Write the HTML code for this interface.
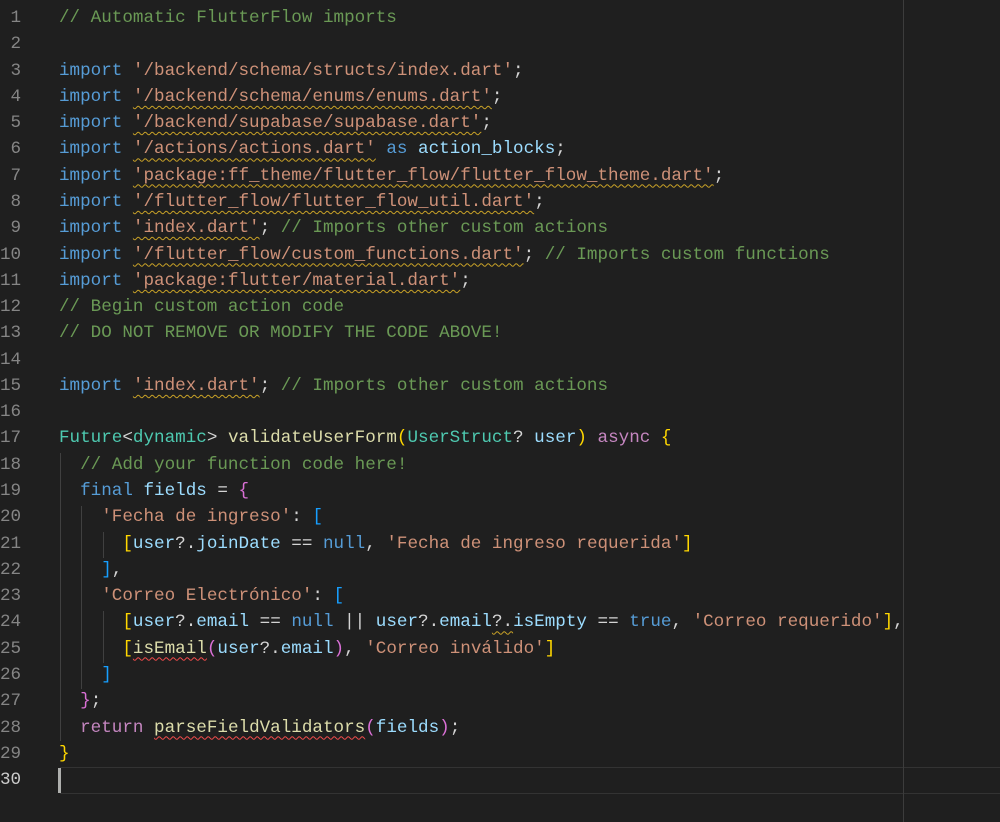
<!DOCTYPE html>
<html><head><meta charset="utf-8"><style>
html,body{margin:0;padding:0;background:#1f1f1f;width:1000px;height:822px;overflow:hidden}
body{font-family:"Liberation Mono",monospace;font-size:17.6px;color:#d4d4d4;position:relative}
.ln{position:absolute;left:0;width:21px;text-align:right;color:#858585;height:26.28px;line-height:26.28px}
.cd{position:absolute;left:59px;white-space:pre;height:26.28px;line-height:26.28px}
.c{color:#6a9955}.k{color:#569cd6}.s{color:#ce9178}.t{color:#4ec9b0}.f{color:#dcdcaa}.v{color:#9cdcfe}.p{color:#c586c0}
.b1{color:#ffd700}.b2{color:#da70d6}.b3{color:#179fff}
.w{text-decoration:underline wavy #c9a227;text-underline-offset:4px;text-decoration-thickness:1px}
.r{text-decoration:underline wavy #f14c4c;text-underline-offset:4px;text-decoration-thickness:1px}
.g{position:absolute;width:1px;background:#404040}
</style></head><body>
<div style="position:absolute;left:60px;top:767px;width:940px;height:25px;border-top:1px solid #333;border-bottom:1px solid #333"></div>
<div style="position:absolute;left:58px;top:768px;width:3px;height:25px;background:#aeafad"></div>
<div style="position:absolute;left:903px;top:0;width:1px;height:822px;background:#3c3c3c"></div>
<div class="g" style="left:60px;top:453px;height:288px"></div>
<div class="g" style="left:81px;top:506px;height:183px"></div>
<div class="g" style="left:103px;top:532px;height:26px"></div>
<div class="g" style="left:103px;top:611px;height:52px"></div>
<div id="c"></div>
<script>
var L=[
'<span class="c">// Automatic FlutterFlow imports</span>',
'',
'<span class="k">import</span> <span class="s">\'/backend/schema/structs/index.dart\'</span>;',
'<span class="k">import</span> <span class="s w">\'/backend/schema/enums/enums.dart\'</span>;',
'<span class="k">import</span> <span class="s w">\'/backend/supabase/supabase.dart\'</span>;',
'<span class="k">import</span> <span class="s w">\'/actions/actions.dart\'</span> <span class="k">as</span> <span class="v">action_blocks</span>;',
'<span class="k">import</span> <span class="s w">\'package:ff_theme/flutter_flow/flutter_flow_theme.dart\'</span>;',
'<span class="k">import</span> <span class="s w">\'/flutter_flow/flutter_flow_util.dart\'</span>;',
'<span class="k">import</span> <span class="s w">\'index.dart\'</span>; <span class="c">// Imports other custom actions</span>',
'<span class="k">import</span> <span class="s w">\'/flutter_flow/custom_functions.dart\'</span>; <span class="c">// Imports custom functions</span>',
'<span class="k">import</span> <span class="s w">\'package:flutter/material.dart\'</span>;',
'<span class="c">// Begin custom action code</span>',
'<span class="c">// DO NOT REMOVE OR MODIFY THE CODE ABOVE!</span>',
'',
'<span class="k">import</span> <span class="s w">\'index.dart\'</span>; <span class="c">// Imports other custom actions</span>',
'',
'<span class="t">Future</span>&lt;<span class="t">dynamic</span>&gt; <span class="f">validateUserForm</span><span class="b1">(</span><span class="t">UserStruct</span>? <span class="v">user</span><span class="b1">)</span> <span class="p">async</span> <span class="b1">{</span>',
'  <span class="c">// Add your function code here!</span>',
'  <span class="k">final</span> <span class="v">fields</span> = <span class="b2">{</span>',
'    <span class="s">\'Fecha de ingreso\'</span>: <span class="b3">[</span>',
'      <span class="b1">[</span><span class="v">user</span>?.<span class="v">joinDate</span> == <span class="k">null</span>, <span class="s">\'Fecha de ingreso requerida\'</span><span class="b1">]</span>',
'    <span class="b3">]</span>,',
'    <span class="s">\'Correo Electrónico\'</span>: <span class="b3">[</span>',
'      <span class="b1">[</span><span class="v">user</span>?.<span class="v">email</span> == <span class="k">null</span> || <span class="v">user</span>?.<span class="v">email</span><span class="w">?.</span><span class="v">isEmpty</span> == <span class="k">true</span>, <span class="s">\'Correo requerido\'</span><span class="b1">]</span>,',
'      <span class="b1">[</span><span class="f r">isEmail</span><span class="b2">(</span><span class="v">user</span>?.<span class="v">email</span><span class="b2">)</span>, <span class="s">\'Correo inválido\'</span><span class="b1">]</span>',
'    <span class="b3">]</span>',
'  <span class="b2">}</span>;',
'  <span class="p">return</span> <span class="f r">parseFieldValidators</span><span class="b2">(</span><span class="v">fields</span><span class="b2">)</span>;',
'<span class="b1">}</span>',
''];
var h='';
for(var i=0;i<L.length;i++){var t=5+i*26.28;
h+='<div class="ln" style="top:'+t+'px;'+(i==29?'color:#ccc;':'')+'">'+(i+1)+'</div><div class="cd" style="top:'+t+'px">'+L[i]+'</div>';}
document.getElementById('c').innerHTML=h;
</script>
</body></html>
